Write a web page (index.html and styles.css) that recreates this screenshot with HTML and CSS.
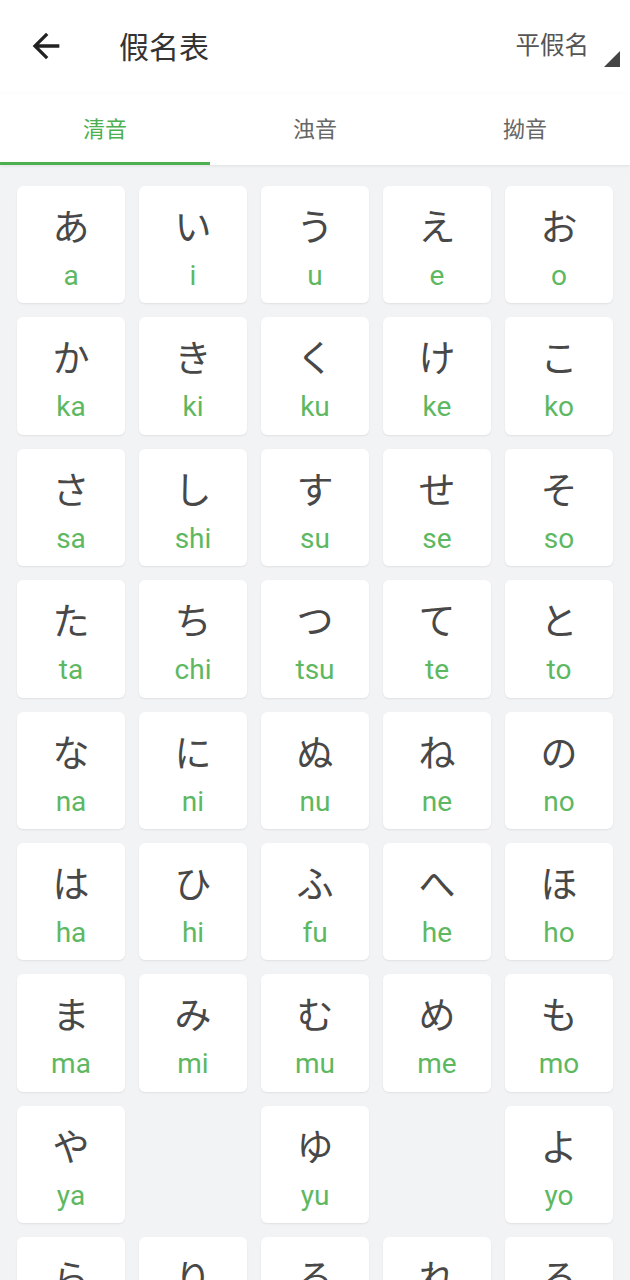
FILE: index.html
```html
<!DOCTYPE html>
<html lang="zh">
<head>
<meta charset="utf-8">
<link rel="stylesheet" href="styles.css">
</head>
<body>
<div class="app">
  <header class="topbar">
    <svg class="back" viewBox="0 0 24 24" width="40" height="40"><path d="M20 11H7.83l5.59-5.59L12 4l-8 8 8 8 1.41-1.41L7.83 13H20v-2z" fill="#222"/></svg>
    <h1 class="title">假名表</h1>
    <div class="switch">
      <span class="switch-label">平假名</span>
      <svg class="corner" viewBox="0 0 16 16" width="16" height="16"><polygon points="16,0 16,16 0,16" fill="#444"/></svg>
    </div>
  </header>
  <nav class="tabs">
    <div class="tab active">清音</div>
    <div class="tab">浊音</div>
    <div class="tab">拗音</div>
  </nav>
  <main class="grid">
    <div class="card"><span class="kana">あ</span><span class="roma">a</span></div>
    <div class="card"><span class="kana">い</span><span class="roma">i</span></div>
    <div class="card"><span class="kana">う</span><span class="roma">u</span></div>
    <div class="card"><span class="kana">え</span><span class="roma">e</span></div>
    <div class="card"><span class="kana">お</span><span class="roma">o</span></div>

    <div class="card"><span class="kana">か</span><span class="roma">ka</span></div>
    <div class="card"><span class="kana">き</span><span class="roma">ki</span></div>
    <div class="card"><span class="kana">く</span><span class="roma">ku</span></div>
    <div class="card"><span class="kana">け</span><span class="roma">ke</span></div>
    <div class="card"><span class="kana">こ</span><span class="roma">ko</span></div>

    <div class="card"><span class="kana">さ</span><span class="roma">sa</span></div>
    <div class="card"><span class="kana">し</span><span class="roma">shi</span></div>
    <div class="card"><span class="kana">す</span><span class="roma">su</span></div>
    <div class="card"><span class="kana">せ</span><span class="roma">se</span></div>
    <div class="card"><span class="kana">そ</span><span class="roma">so</span></div>

    <div class="card"><span class="kana">た</span><span class="roma">ta</span></div>
    <div class="card"><span class="kana">ち</span><span class="roma">chi</span></div>
    <div class="card"><span class="kana">つ</span><span class="roma">tsu</span></div>
    <div class="card"><span class="kana">て</span><span class="roma">te</span></div>
    <div class="card"><span class="kana">と</span><span class="roma">to</span></div>

    <div class="card"><span class="kana">な</span><span class="roma">na</span></div>
    <div class="card"><span class="kana">に</span><span class="roma">ni</span></div>
    <div class="card"><span class="kana">ぬ</span><span class="roma">nu</span></div>
    <div class="card"><span class="kana">ね</span><span class="roma">ne</span></div>
    <div class="card"><span class="kana">の</span><span class="roma">no</span></div>

    <div class="card"><span class="kana">は</span><span class="roma">ha</span></div>
    <div class="card"><span class="kana">ひ</span><span class="roma">hi</span></div>
    <div class="card"><span class="kana">ふ</span><span class="roma">fu</span></div>
    <div class="card"><span class="kana">へ</span><span class="roma">he</span></div>
    <div class="card"><span class="kana">ほ</span><span class="roma">ho</span></div>

    <div class="card"><span class="kana">ま</span><span class="roma">ma</span></div>
    <div class="card"><span class="kana">み</span><span class="roma">mi</span></div>
    <div class="card"><span class="kana">む</span><span class="roma">mu</span></div>
    <div class="card"><span class="kana">め</span><span class="roma">me</span></div>
    <div class="card"><span class="kana">も</span><span class="roma">mo</span></div>

    <div class="card"><span class="kana">や</span><span class="roma">ya</span></div>
    <div class="empty"></div>
    <div class="card"><span class="kana">ゆ</span><span class="roma">yu</span></div>
    <div class="empty"></div>
    <div class="card"><span class="kana">よ</span><span class="roma">yo</span></div>

    <div class="card"><span class="kana">ら</span><span class="roma">ra</span></div>
    <div class="card"><span class="kana">り</span><span class="roma">ri</span></div>
    <div class="card"><span class="kana">る</span><span class="roma">ru</span></div>
    <div class="card"><span class="kana">れ</span><span class="roma">re</span></div>
    <div class="card"><span class="kana">ろ</span><span class="roma">ro</span></div>
  </main>
</div>
</body>
</html>
```

FILE: styles.css
```css
* { box-sizing: border-box; }
html, body {
  margin: 0;
  padding: 0;
  background: #f2f3f5;
}
body {
  font-family: "Noto Sans CJK SC", "Noto Sans", sans-serif;
  width: 630px;
}
.app {
  width: 630px;
}
.topbar {
  height: 94px;
  background: #fff;
  display: flex;
  align-items: center;
  padding-left: 26px;
  padding-right: 10px;
}
.back {
  display: block;
  flex: none;
  margin-top: -2px;
}
.title {
  margin: -5px 0 0 53px;
  font-size: 30px;
  font-weight: 400;
  color: #333;
  line-height: 40px;
  flex: 1;
}
.switch {
  display: flex;
  align-items: center;
  gap: 15px;
}
.switch-label {
  font-size: 24.5px;
  color: #555;
  line-height: 32px;
  margin-top: -7px;
  margin-left: -5px;
}
.corner {
  display: block;
  margin-top: 24px;
}
.tabs {
  height: 71px;
  background: #fff;
  display: flex;
  box-shadow: 0 1px 3px rgba(0,0,0,0.08);
  position: relative;
  z-index: 1;
}
.tab {
  flex: 1;
  display: flex;
  align-items: center;
  justify-content: center;
  font-size: 22px;
  color: #666;
  border-bottom: 3px solid transparent;
  padding-bottom: 3px;
}
.tab.active {
  color: #4caf50;
  border-bottom-color: #4caf50;
}
.grid {
  display: grid;
  grid-template-columns: repeat(5, 108px);
  grid-auto-rows: 117.4px;
  column-gap: 14px;
  row-gap: 14px;
  padding: 21px 17px 20px;
}
.card {
  background: #fff;
  border-radius: 6px;
  box-shadow: 0 1px 2px rgba(0,0,0,0.08);
  display: flex;
  flex-direction: column;
  align-items: center;
  padding-top: 14px;
}
.kana {
  font-family: "Noto Sans CJK JP", "Noto Sans CJK SC", sans-serif;
  font-size: 37px;
  line-height: 50px;
  color: #484848;
}
.roma {
  font-family: Roboto, "Noto Sans", sans-serif;
  font-size: 28px;
  line-height: 34px;
  color: #5db861;
  margin-top: 9px;
}
```
